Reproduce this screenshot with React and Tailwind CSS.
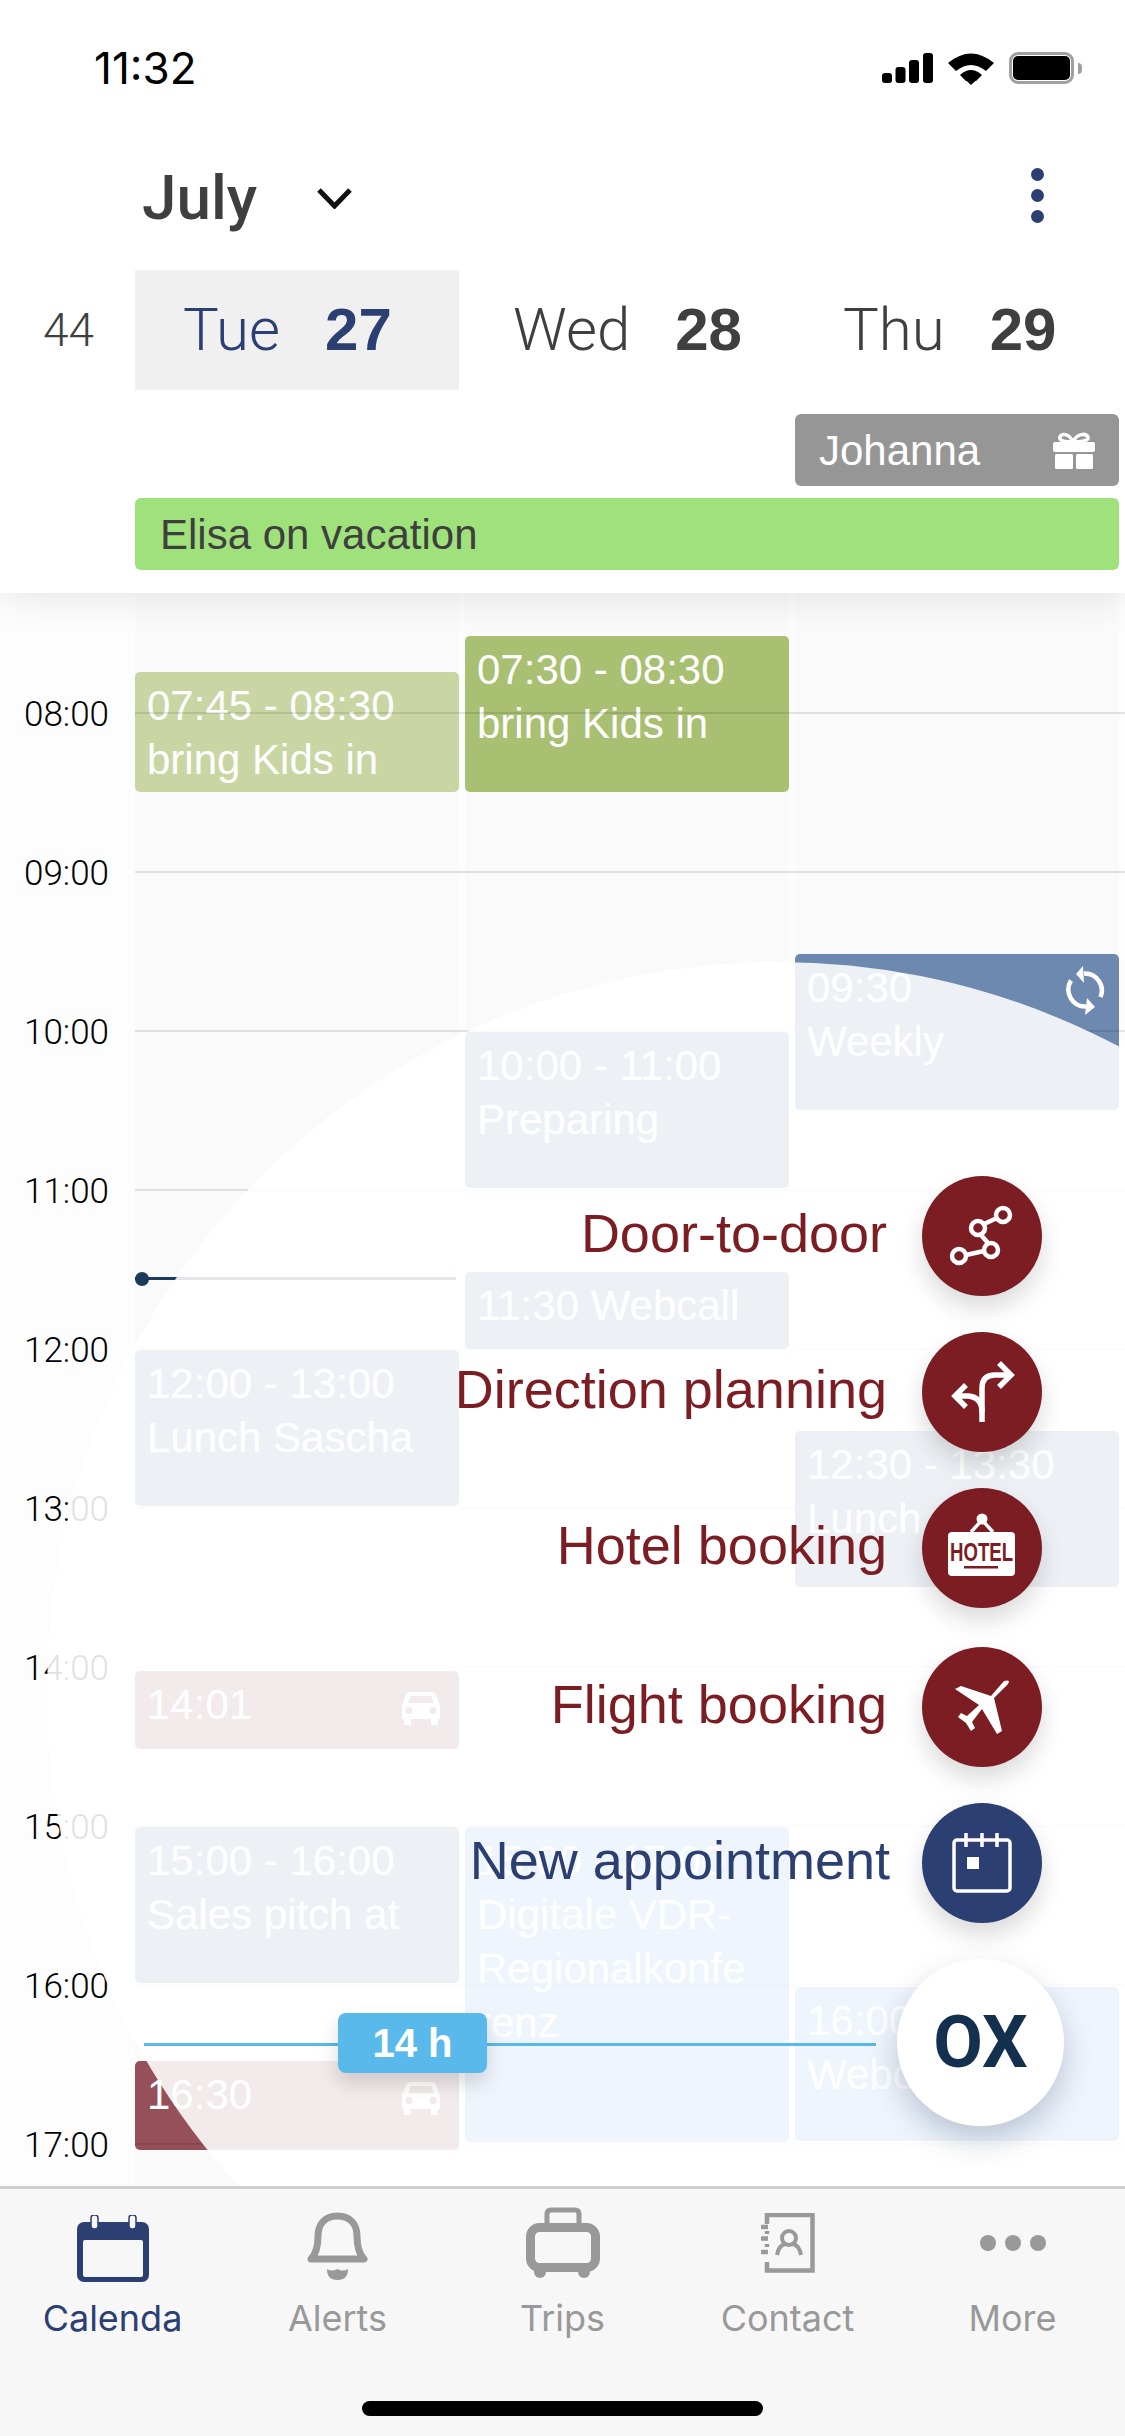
import React from 'react';

const CAL_TOP = 593;
const HOURS = ['08:00', '09:00', '10:00', '11:00', '12:00', '13:00', '14:00', '15:00', '16:00', '17:00'];

const COLUMNS = [
  [
    { y: 672, h: 120, lines: ['07:45 - 08:30', 'bring Kids in'], cls: 'bg-[#c9d6a4]' },
    { y: 1350, h: 156, lines: ['12:00 - 13:00', 'Lunch Sascha'], cls: 'bg-[#6d8dac]' },
    { y: 1671, h: 78, lines: ['14:01'], cls: 'bg-[#96505a]', icon: 'car' },
    { y: 1827, h: 156, lines: ['15:00 - 16:00', 'Sales pitch at'], cls: 'bg-[#6d8dac]' },
    { y: 2061, h: 89, lines: ['16:30'], cls: 'bg-[#96505a]', icon: 'car' },
  ],
  [
    { y: 636, h: 156, lines: ['07:30 - 08:30', 'bring Kids in'], cls: 'bg-[#a9bf72]' },
    { y: 1032, h: 156, lines: ['10:00 - 11:00', 'Preparing'], cls: 'bg-[#6d8dac]' },
    { y: 1272, h: 77, lines: ['11:30 Webcall'], cls: 'bg-[#6d8dac]' },
    { y: 1827, h: 315, lines: ['15:00 - 17:00', 'Digitale VDR-', 'Regionalkonfe', 'renz'], cls: 'bg-[#7aaee9]' },
  ],
  [
    { y: 954, h: 156, lines: ['09:30', 'Weekly'], cls: 'bg-[#6d89b0]', icon: 'sync' },
    { y: 1431, h: 156, lines: ['12:30 - 13:30', 'Lunch'], cls: 'bg-[#6d8dac]' },
    { y: 1987, h: 154, lines: ['16:00 - 17:00', 'Webcall'], cls: 'bg-[#7aaee9]' },
  ],
];

function StatusIcons() {
  return (
    <div className="flex items-center">
      <svg width="51" height="30" viewBox="0 0 51 30" fill="#000">
        <rect x="0" y="20" width="10" height="10" rx="3" />
        <rect x="13.5" y="14" width="10" height="16" rx="3" />
        <rect x="27" y="7" width="10" height="23" rx="3" />
        <rect x="41" y="0" width="10" height="30" rx="3" />
      </svg>
      <svg className="ml-[15px]" width="46" height="33" viewBox="0 0 46 33" fill="#000">
        <path d="M0 11 Q23 -8 46 11 L38 19 Q23 7 8 19 Z" />
        <path d="M12 23 Q23 13 34 23 L28 29 Q23 25 18 29 Z" />
        <path d="M23 33 L15.5 26 Q23 21 30.5 26 Z" />
      </svg>
      <div className="ml-[15px] flex items-center">
        <div className="w-[65px] h-[32px] rounded-[9px] border-[3px] border-[#a0a0a0] p-[1px]">
          <div className="w-full h-full rounded-[5px] bg-black" />
        </div>
        <div className="w-[4px] h-[11px] ml-[4px] rounded-r-full bg-[#a0a0a0]" />
      </div>
    </div>
  );
}

function GiftIcon() {
  return (
    <svg width="42" height="37" viewBox="0 0 42 37">
      <path d="M20 10 C12 10 6 9 7 5 C8 1 16 1 20 10 C24 1 33 1 35 5 C36 9 28 10 20 10 Z" fill="none" stroke="#fff" strokeWidth="3.5" />
      <rect x="0" y="10" width="42" height="10" rx="2" fill="#fff" />
      <rect x="2" y="22" width="18" height="15" rx="1.5" fill="#fff" />
      <rect x="23" y="22" width="17" height="15" rx="1.5" fill="#fff" />
    </svg>
  );
}

function Header() {
  return (
    <header className="relative z-20 h-[593px] shrink-0 bg-white shadow-[0_0_40px_rgba(0,0,0,0.12)]">
      <div className="h-[136px] pl-[94px] pr-[43px] flex items-center justify-between">
        <span className="font-['Inter',sans-serif] text-[44px] leading-none text-black">11:32</span>
        <StatusIcons />
      </div>
      <div className="h-[134px] pb-[10px] pl-[142px] pr-[81px] flex items-center">
        <span className="font-['Roboto',sans-serif] font-medium text-[62px] leading-none text-[#3f3f3f]">July</span>
        <svg className="ml-[60px]" width="35" height="22" viewBox="0 0 35 22" fill="none" stroke="#111" strokeWidth="5">
          <path d="M2 3 L17.5 19 L33 3" />
        </svg>
        <div className="ml-auto -mt-[6px] flex flex-col gap-[8px]">
          <span className="w-[13px] h-[13px] rounded-full bg-[#2c3f72]" />
          <span className="w-[13px] h-[13px] rounded-full bg-[#2c3f72]" />
          <span className="w-[13px] h-[13px] rounded-full bg-[#2c3f72]" />
        </div>
      </div>
      <div className="h-[120px] flex items-center pr-[6px]">
        <div className="w-[135px] pl-[43px] font-['Roboto',sans-serif] font-light text-[46px] leading-none text-[#3f3f3f]">44</div>
        <div className="flex-1 grid grid-cols-3 gap-[6px] h-full">
          {[
            { day: 'Tue', num: '27', active: true },
            { day: 'Wed', num: '28' },
            { day: 'Thu', num: '29' },
          ].map(d => (
            <div
              key={d.day}
              className={`flex items-center pl-[48px] gap-[45px] text-[60px] leading-none ${d.active ? 'bg-[#f0f0f0] text-[#2c3f72]' : 'text-[#3f3f3f]'}`}
            >
              <span className="font-['Roboto',sans-serif] font-light">{d.day}</span>
              <span className="font-bold">{d.num}</span>
            </div>
          ))}
        </div>
      </div>
      <div className="pt-[24px] pl-[135px] pr-[6px] grid grid-cols-3 gap-x-[6px] gap-y-[12px]">
        <div className="col-start-3 h-[72px] rounded-md bg-[#969696] pl-[24px] pr-[24px] flex items-center justify-between text-white text-[42px]">
          <span>Johanna</span>
          <GiftIcon />
        </div>
        <div className="col-span-3 h-[72px] rounded-md bg-[#9fe27b] pl-[25px] flex items-center text-[#3f3f3f] text-[42px]">
          Elisa on vacation
        </div>
      </div>
    </header>
  );
}

function CarIcon() {
  return (
    <svg className="absolute top-[21px] right-[19px]" width="38" height="33" viewBox="0 0 38 33" fill="#fff" fillRule="evenodd">
      <path d="M8 0 H30 Q33 0 34 3 L37 11 Q38 12 38 14 V27 H36 V33 H29 V27 H9 V33 H2 V27 H0 V14 Q0 12 1 11 L4 3 Q5 0 8 0 Z M9 4 L6 11 H32 L29 4 Z M7 15 A3.5 3.5 0 1 0 7 22 A3.5 3.5 0 1 0 7 15 Z M31 15 A3.5 3.5 0 1 0 31 22 A3.5 3.5 0 1 0 31 15 Z" />
    </svg>
  );
}

function SyncIcon() {
  return (
    <svg className="absolute top-[11px] right-[14px]" width="40" height="50" viewBox="0 0 40 50">
      <path d="M19 8.5 A17 17 0 0 1 35.5 32 M21 41.5 A17 17 0 0 1 6 15.5" fill="none" stroke="#fff" strokeWidth="4.5" />
      <path d="M18 1 L11 9 L19 18 Z M22 33 L30 42 L20 50 Z" fill="#fff" />
    </svg>
  );
}

function EventCard({ ev }) {
  return (
    <div
      className={`absolute inset-x-0 rounded-[5px] px-[12px] pt-[7px] text-white text-[42px] leading-[54px] whitespace-nowrap overflow-hidden ${ev.cls}`}
      style={{ top: ev.y - CAL_TOP, height: ev.h }}
    >
      {ev.lines.map(line => <div key={line}>{line}</div>)}
      {ev.icon === 'car' && <CarIcon />}
      {ev.icon === 'sync' && <SyncIcon />}
    </div>
  );
}

function Calendar() {
  return (
    <main className="relative flex-1 overflow-hidden bg-[#fdfdfd]">
      {/* columns and events sit under the hour lines */}
      <div className="absolute inset-0 pl-[135px] pr-[6px] grid grid-cols-3 gap-[6px]">
        {COLUMNS.map((col, i) => (
          <div key={i} className="relative bg-[#fafafa]">
            {col.map(ev => <EventCard key={ev.y} ev={ev} />)}
            {i === 0 && (
              <div className="absolute left-0 right-[3px] top-[684px] h-[3px] bg-[#1b3a5c]">
                <div className="absolute left-0 top-[-5px] w-[14px] h-[14px] rounded-full bg-[#1b3a5c]" />
              </div>
            )}
          </div>
        ))}
      </div>

      <div className="relative pt-[119px]">
        {HOURS.map(h => (
          <div key={h} className="h-[159px] flex items-start">
            <span className="w-[135px] pl-[24px] -mt-[17px] font-['Roboto',sans-serif] font-light text-[35px] leading-[40px] text-black">{h}</span>
            <div className="flex-1 h-[2px] bg-black/10" />
          </div>
        ))}
      </div>

      {/* white circle that opens behind the action menu */}
      <div className="absolute left-[47px] top-[369px] w-[1462px] h-[1462px] rounded-full bg-white/88" />

      <div className="absolute left-[144px] top-[1450px] w-[732px] h-[3px] bg-[#58b9ea]" />
      <div className="absolute left-[338px] top-[1420px] w-[149px] h-[60px] rounded-lg bg-[#58b9ea] shadow-[0_10px_20px_rgba(0,0,0,0.15)] flex items-center justify-center text-white font-bold text-[40px] leading-none">
        14 h
      </div>

      <ActionMenu />

      <div className="absolute left-[897px] top-[1366px] w-[167px] h-[167px] rounded-full bg-white shadow-[0_14px_30px_rgba(40,60,90,0.25)] flex items-center justify-center font-['Roboto',sans-serif] font-bold text-[72px] leading-none text-[#14304f]">
        OX
      </div>
    </main>
  );
}

function RouteIcon() {
  return (
    <svg width="120" height="120" viewBox="0 0 120 120" fill="none" stroke="#fff" strokeWidth="4.5">
      <path d="M44 79 L62 75 M66 67 L59 59 M62 48 L75 42" />
      <circle cx="81" cy="39" r="7" />
      <circle cx="56" cy="52" r="7" />
      <circle cx="69" cy="74" r="7" />
      <circle cx="37" cy="80" r="7" />
    </svg>
  );
}

function DirectionIcon() {
  return (
    <svg width="120" height="120" viewBox="0 0 120 120" fill="none" stroke="#fff" strokeWidth="5.5">
      <path d="M60 90 V56 Q60 43 73 43 H88" />
      <path d="M77 31 L89 43 L77 55" />
      <path d="M33 64 H46 Q60 65 60 80" />
      <path d="M44 53 L33 64 L44 75" />
    </svg>
  );
}

function HotelIcon() {
  return (
    <svg width="120" height="120" viewBox="0 0 120 120">
      <circle cx="60" cy="31" r="5.5" fill="#fff" />
      <path d="M49 44 L60 32 L71 44" fill="none" stroke="#fff" strokeWidth="3.5" />
      <rect x="26" y="44" width="67" height="44" rx="4" fill="#fff" />
      <text x="28" y="73" textLength="63" lengthAdjust="spacingAndGlyphs" fontFamily="Liberation Sans, sans-serif" fontWeight="700" fontSize="25" fill="#7b1d22">HOTEL</text>
      <rect x="42" y="78" width="34" height="2.5" fill="#7b1d22" />
    </svg>
  );
}

function PlaneIcon() {
  return (
    <svg width="120" height="120" viewBox="0 0 120 120" fill="#fff">
      <path d="M82 34 L69 49 L39 39 L33 42 L57 58 L45 69 L39 66 L36 70 L44 76 L49 84 L53 81 L50 75 L60 62 L75 87 L80 84 L72 51 L86 37 Q89 32 82 34 Z" />
    </svg>
  );
}

function NewApptIcon() {
  return (
    <svg width="120" height="120" viewBox="0 0 120 120" fill="none" stroke="#fff" strokeWidth="3.5">
      <rect x="32" y="37" width="56" height="51" rx="3" />
      <path d="M44 30 V44 M60 30 V44 M75 30 V44" />
      <rect x="45" y="54" width="12" height="12" fill="#fff" stroke="none" />
    </svg>
  );
}

const ACTIONS = [
  { label: 'Door-to-door', icon: <RouteIcon /> },
  { label: 'Direction planning', icon: <DirectionIcon /> },
  { label: 'Hotel booking', icon: <HotelIcon /> },
  { label: 'Flight booking', icon: <PlaneIcon />, row: 'mt-[3px]' },
  { label: 'New appointment', icon: <NewApptIcon />, blue: true },
];

function ActionMenu() {
  return (
    <div className="absolute right-[83px] top-[583px] flex flex-col items-end gap-9">
      {ACTIONS.map(a => (
        <div key={a.label} className={`flex items-center ${a.row || ''}`}>
          <span className={`whitespace-nowrap pb-[7px] text-[54px] leading-none ${a.blue ? 'mr-[32px] text-[#2c3f72]' : 'mr-[35px] text-[#7b1d22]'}`}>
            {a.label}
          </span>
          <div className={`w-[120px] h-[120px] rounded-full shadow-[0_12px_24px_rgba(0,0,0,0.15)] ${a.blue ? 'bg-[#2c3f72]' : 'bg-[#7b1d22]'}`}>
            {a.icon}
          </div>
        </div>
      ))}
    </div>
  );
}

function TabCalendar() {
  return (
    <svg width="72" height="67" viewBox="0 0 72 67">
      <rect x="0" y="7" width="72" height="60" rx="7" fill="#2c3f72" />
      <rect x="6" y="25" width="60" height="37" rx="2" fill="#f7f7f7" />
      <rect x="14" y="0" width="7" height="14" rx="3" fill="#f7f7f7" stroke="#2c3f72" strokeWidth="1.5" />
      <rect x="52" y="0" width="7" height="14" rx="3" fill="#f7f7f7" stroke="#2c3f72" strokeWidth="1.5" />
    </svg>
  );
}

function TabBell() {
  return (
    <svg width="63" height="68" viewBox="0 0 63 68" fill="none">
      <path d="M5 47 Q12 40 12 24 C12 11 20 4 31.5 4 C43 4 51 11 51 24 Q51 40 58 47 Z" stroke="#999" strokeWidth="7" strokeLinejoin="round" />
      <path d="M21 57 Q26 60 31.5 57 Q37 60 42 57 Q42 68 31.5 68 Q21 68 21 57 Z" fill="#999" />
    </svg>
  );
}

function TabSuitcase() {
  return (
    <svg width="74" height="72" viewBox="0 0 74 72" fill="none">
      <path d="M21 18 V7 Q21 3 25 3 H49 Q53 3 53 7 V18" stroke="#999" strokeWidth="5" />
      <rect x="4.5" y="20.5" width="65" height="40" rx="9" stroke="#999" strokeWidth="9" />
      <circle cx="14" cy="65" r="6" fill="#999" />
      <circle cx="58" cy="65" r="6" fill="#999" />
    </svg>
  );
}

function TabContact() {
  return (
    <svg width="54" height="60" viewBox="0 0 54 60" fill="none" stroke="#999">
      <path d="M6 11 V2 H51.5 V57.5 H6 V49" strokeWidth="4.5" />
      <path d="M0 14 H7 M0 25.5 H7 M0 39 H7" strokeWidth="4.5" />
      <path d="M6 18 V21 M6 31 V34" strokeWidth="4.5" />
      <circle cx="28" cy="25" r="7" strokeWidth="4" />
      <path d="M16 42 Q18 32 24 31 M40 42 Q38 32 32 31" strokeWidth="4" />
    </svg>
  );
}

function TabMore() {
  return (
    <div className="flex gap-[9px]">
      <span className="w-[16px] h-[16px] rounded-full bg-[#999]" />
      <span className="w-[16px] h-[16px] rounded-full bg-[#999]" />
      <span className="w-[16px] h-[16px] rounded-full bg-[#999]" />
    </div>
  );
}

const TABS = [
  { label: 'Calenda', icon: <TabCalendar />, active: true, pos: 'pt-[9px]' },
  { label: 'Alerts', icon: <TabBell />, pos: 'pt-[6px]' },
  { label: 'Trips', icon: <TabSuitcase />, pos: 'pt-[1px]' },
  { label: 'Contact', icon: <TabContact />, pos: 'pt-[7px]' },
  { label: 'More', icon: <TabMore />, pos: 'pt-[29px]' },
];

function TabBar() {
  return (
    <nav className="relative z-20 h-[250px] shrink-0 border-t-[3px] border-[#cfcfcf] bg-[#f7f7f7] flex flex-col">
      <div className="flex pt-[17px]">
        {TABS.map(t => (
          <div key={t.label} className="flex-1 flex flex-col items-center">
            <div className={`h-[84px] ${t.pos}`}>{t.icon}</div>
            <span className={`mt-[6px] font-['Inter',sans-serif] text-[36px] leading-[44px] ${t.active ? 'text-[#2c3f72]' : 'text-[#999]'}`}>
              {t.label}
            </span>
          </div>
        ))}
      </div>
      <div className="mt-[61px] mx-auto w-[401px] h-[15px] rounded-full bg-black" />
    </nav>
  );
}

export default function App() {
  return (
    <div className="w-[1125px] h-[2436px] overflow-hidden flex flex-col bg-white font-['Liberation_Sans',sans-serif]">
      <Header />
      <Calendar />
      <TabBar />
    </div>
  );
}
